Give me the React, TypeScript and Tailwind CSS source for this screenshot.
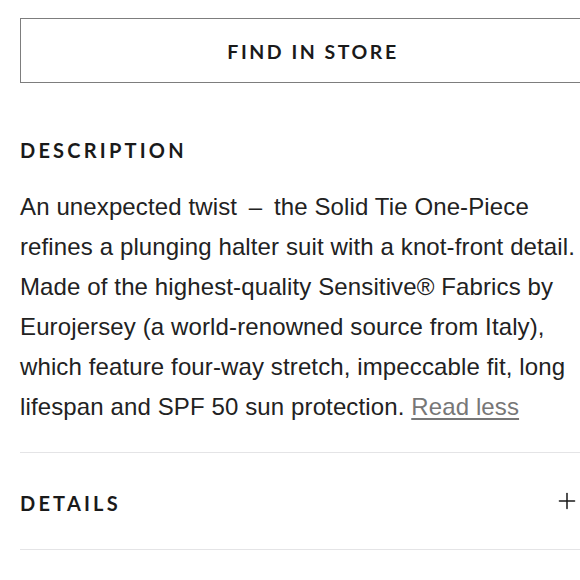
import { Plus } from "lucide-react";

// ─── Data ─────────────────────────────────────────────────────────────────────
const LINES = [
  "An unexpected twist \u2009\u2013\u2009 the Solid Tie One-Piece",
  "refines a plunging halter suit with a knot-front detail.",
  "Made of the highest-quality Sensitive\u00ae Fabrics by",
  "Eurojersey (a world-renowned source from Italy),",
  "which feature four-way stretch, impeccable fit, long",
];

const HEAD = { fontFamily: "Lato, 'DejaVu Sans', sans-serif" };
const BODY = { fontFamily: "'Liberation Sans', Arial, sans-serif" };

// ─── Page ─────────────────────────────────────────────────────────────────────
export default function App() {
  return (
    <div className="w-full h-[580px] overflow-hidden bg-white">
      <div className="w-[570px] ml-5 pt-[18px]">
        {/* Find in store */}
        <button className="w-[586px] h-[65px] border border-[#7d7d7d] bg-white flex items-center justify-center">
          <span
            className="text-[19.5px] font-bold tracking-[0.13em] text-[#1a1a1a] mt-0.5"
            style={HEAD}
          >
            FIND IN STORE
          </span>
        </button>

        {/* Description */}
        <h3
          className="mt-[55px] text-[20px] leading-6 font-bold tracking-[0.16em] text-[#1a1a1a]"
          style={HEAD}
        >
          DESCRIPTION
        </h3>

        <div
          className="mt-[25px] text-[24px] leading-[40px] tracking-[0.005em] text-[#222]"
          style={BODY}
        >
          {LINES.map((l) => (
            <div key={l} className="whitespace-nowrap">
              {l}
            </div>
          ))}
          <div className="whitespace-nowrap">
            lifespan and SPF 50 sun protection.{" "}
            <span className="text-[#777] underline underline-offset-[3px]">Read less</span>
          </div>
        </div>

        {/* Details */}
        <div className="mt-[25px] border-y border-[#e4e4e6] h-[98px] w-[600px] flex items-center">
          <span
            className="text-[20px] font-bold tracking-[0.16em] text-[#1a1a1a] mt-1"
            style={HEAD}
          >
            DETAILS
          </span>
          <Plus className="ml-auto mr-[40px] w-[26px] h-[26px] text-[#1a1a1a]" strokeWidth={1.4} />
        </div>
      </div>
    </div>
  );
}
